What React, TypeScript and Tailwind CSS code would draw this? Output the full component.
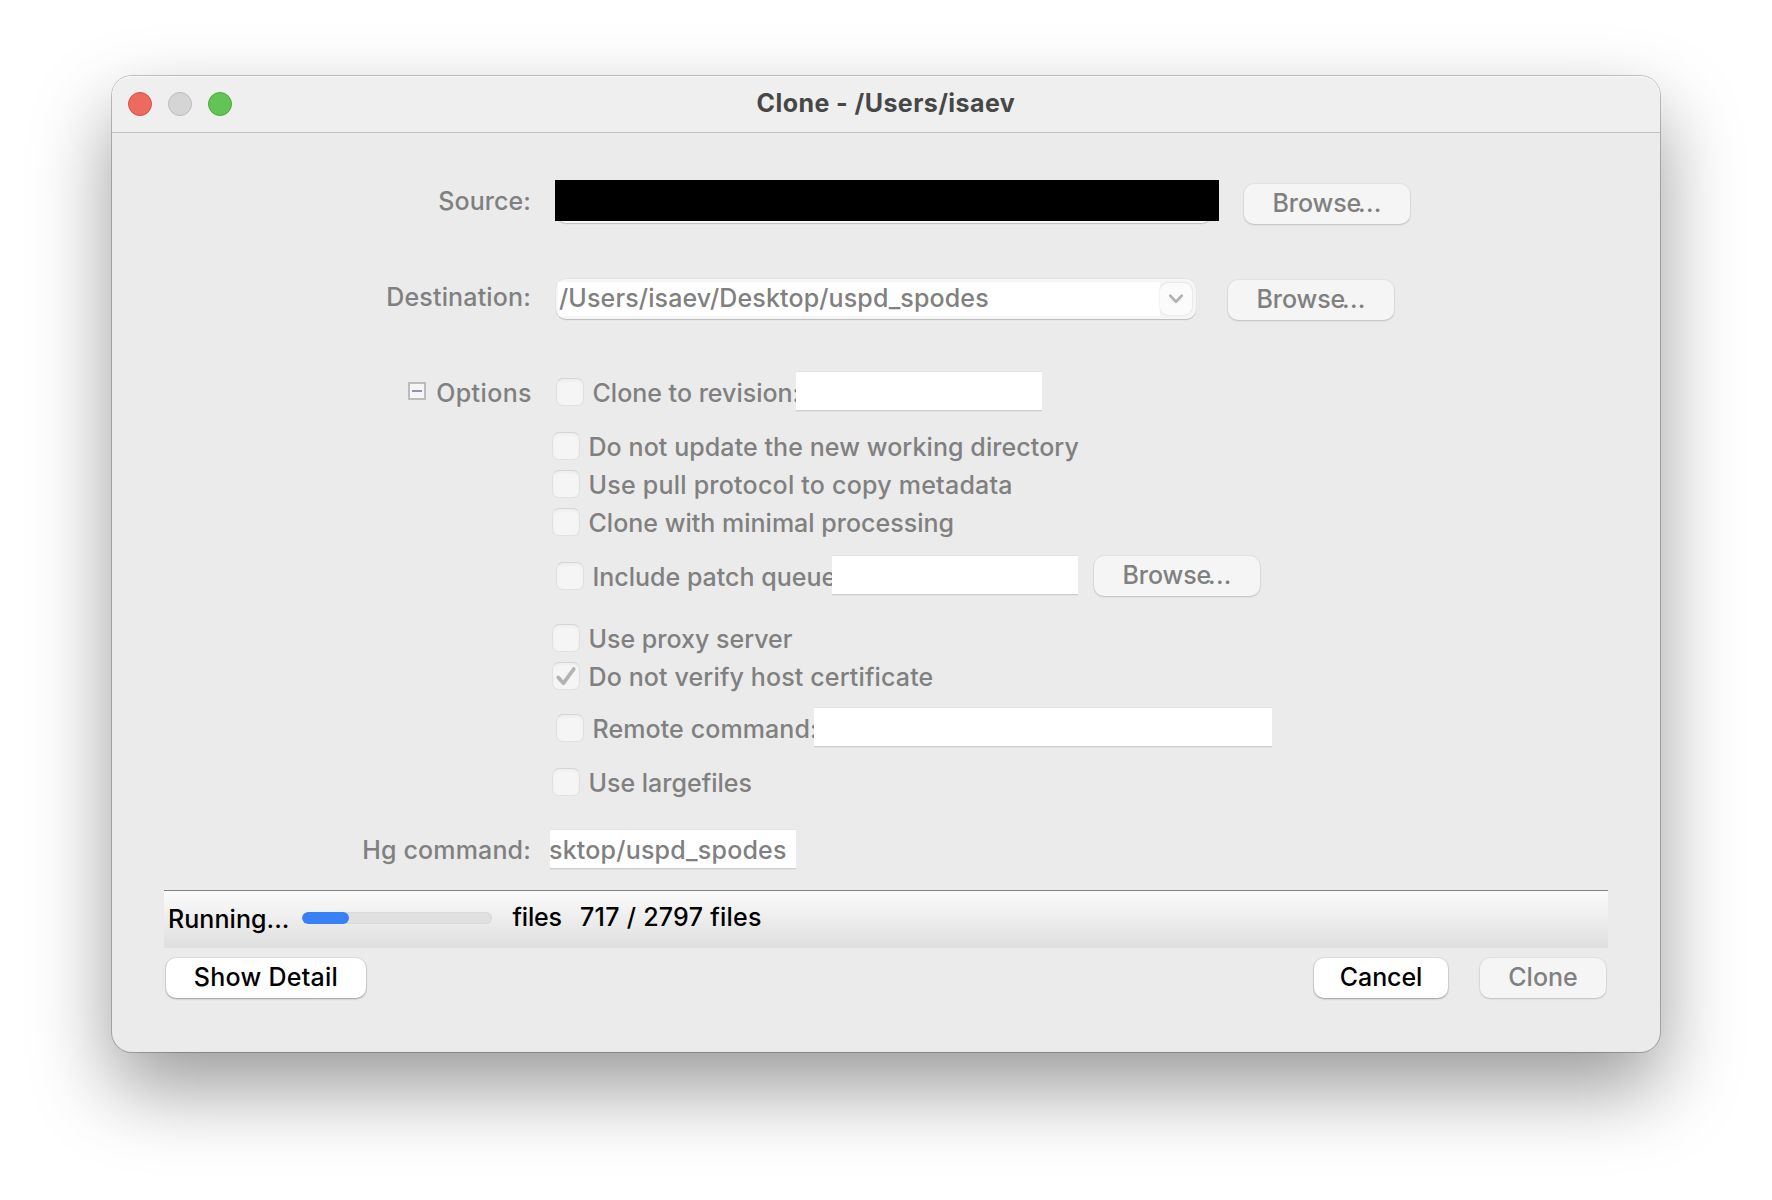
import type { ReactNode } from "react";

function Label({ children, className = "" }: { children: ReactNode; className?: string }) {
  return <div className={`w-[419px] shrink-0 text-right whitespace-nowrap text-[#808080] ${className}`}>{children}</div>;
}

function Check({
  label,
  checked = false,
  className = "",
  textClass = "",
}: {
  label: string;
  checked?: boolean;
  className?: string;
  textClass?: string;
}) {
  return (
    <label className={`flex h-7 shrink-0 gap-[8.5px] ${className}`}>
      <span className="flex size-7 shrink-0 items-center justify-center rounded-[7px] border border-black/[0.08] border-t-black/[0.13] bg-[#f5f5f5] shadow-[inset_0_2px_3px_rgba(0,0,0,0.035)]">
        {checked && (
          <svg width="26" height="26" viewBox="0 0 26 26" fill="none">
            <path d="M5.3 14.4 10.5 20.2 20.8 6" stroke="#b3b3b3" strokeWidth="3.8" strokeLinecap="round" strokeLinejoin="round" />
          </svg>
        )}
      </span>
      <span className={`whitespace-nowrap text-[#808080] ${textClass}`}>{label}</span>
    </label>
  );
}

function Field({ children, className = "" }: { children?: ReactNode; className?: string }) {
  return (
    <div
      className={`relative h-[38px] shrink-0 overflow-hidden bg-white whitespace-nowrap text-[#808080] shadow-[0_1px_0_#cfcfcf,0_2px_0_#dfdfdf,0_-1px_0_rgba(0,0,0,0.03)] ${className}`}
    >
      {children}
    </div>
  );
}

function Button({ children, disabled = false, className = "" }: { children: ReactNode; disabled?: boolean; className?: string }) {
  return (
    <button
      className={`flex h-10 shrink-0 justify-center rounded-[10px] pt-1 whitespace-nowrap ${
        disabled
          ? "bg-[#f5f5f5] text-[#808080] shadow-[0_0_0_1px_rgba(0,0,0,0.03),0_1px_2px_rgba(0,0,0,0.16)]"
          : "bg-white text-black shadow-[0_0_0_1px_rgba(0,0,0,0.05),0_1px_2px_rgba(0,0,0,0.3)]"
      } ${className}`}
    >
      {children}
    </button>
  );
}

function BrowseButton({ className = "" }: { className?: string }) {
  return (
    <Button disabled className={`w-[166px] ${className}`}>
      <span className="tracking-[-0.1px]">Browse</span>
      <span className="-ml-[3px] tracking-[0.2px]">...</span>
    </Button>
  );
}

export default function App() {
  return (
    <div className="flex h-[1200px] w-[1772px] items-start justify-center overflow-hidden bg-white pt-[76px] font-['Inter',sans-serif] text-[25px] leading-[30px] font-medium">
      <div className="flex h-[976px] w-[1548px] flex-col rounded-[20px] bg-[#ebebeb] shadow-[0_0_0_1px_rgba(0,0,0,0.22),0_36px_80px_rgba(0,0,0,0.4)]">
        <header className="flex h-[57px] shrink-0 items-start rounded-t-[20px] border-b border-[#c3c3c3] bg-[#efefef] pl-4 shadow-[inset_0_1px_0_#fafafa]">
          <div className="mt-4 flex w-[340px] gap-4">
            <span className="size-6 rounded-full border border-[#d55248] bg-[#ec6a5e]" />
            <span className="size-6 rounded-full border border-[#bababa] bg-[#d5d5d5]" />
            <span className="size-6 rounded-full border border-[#51a73e] bg-[#61c454]" />
          </div>
          <h1 className="mt-3 ml-[288.5px] text-[25px] leading-[30px] font-bold tracking-[0.43px] whitespace-nowrap text-[#474747]">
            Clone - /Users/isaev
          </h1>
        </header>

        <main className="flex flex-col pt-[47px]">
          <div className="flex h-11">
            <Label className="pt-[6px] tracking-[0.08px]">Source:</Label>
            <div className="relative ml-6 h-[43px] w-[664px]">
              <div className="ml-px h-[43px] w-[656px] rounded-[10px] bg-[#f8f8f8] shadow-[0_1px_1px_rgba(0,0,0,0.2)]" />
              <div className="absolute inset-x-0 top-0 h-[41px] bg-black" />
            </div>
            <BrowseButton className="mt-1 ml-[25px]" />
          </div>

          <div className="mt-[55px] flex h-[41px]">
            <Label className="pt-[3px] tracking-[0.16px]">Destination:</Label>
            <div className="ml-[25px] flex h-10 w-[640px] rounded-[10px] bg-[#f6f6f6] pt-[3px] pl-[2px] shadow-[0_-1px_0_rgba(0,0,0,0.03),0_1px_1px_rgba(0,0,0,0.2)]">
              <div className="h-[34px] w-[602px] bg-white pt-px pl-px tracking-[0.13px] whitespace-nowrap text-[#808080]">
                /Users/isaev/Desktop/uspd_spodes
              </div>
              <div className="mt-px flex h-8 w-8 items-center justify-center rounded-[8px] bg-[#fbfbfb] shadow-[0_0_2px_rgba(0,0,0,0.18)]">
                <svg width="16" height="12" viewBox="0 0 16 12" fill="none">
                  <path d="M2.3 2.8 8 8.8 13.7 2.8" stroke="#b2b2b2" strokeWidth="2.7" strokeLinecap="round" strokeLinejoin="round" />
                </svg>
              </div>
            </div>
            <BrowseButton className="mt-px ml-8" />
          </div>

          <div className="mt-[52px] flex h-[38px]">
            <Label className="flex justify-end pt-[6px] tracking-[0.4px]">
              <span className="mt-1 mr-[10px] flex size-[18px] items-center justify-center border-2 border-[#bcbcbc] bg-[#f6f6f6]">
                <span className="h-[2px] w-[10px] bg-[#8c96b4]" />
              </span>
              <span className="-mr-px">Options</span>
            </Label>
            <Check label="Clone to revision:" className="mt-[6px] ml-[25px]" textClass="w-[203.5px]" />
            <Field className="w-[246px]" />
          </div>

          <div className="mt-[22px] ml-[440px] flex flex-col gap-[10px]">
            <Check label="Do not update the new working directory" textClass="tracking-[0.08px]" />
            <Check label="Use pull protocol to copy metadata" textClass="tracking-[0.23px]" />
            <Check label="Clone with minimal processing" textClass="tracking-[0.01px]" />
          </div>

          <div className="mt-5 ml-[444px] flex h-10">
            <Check label="Include patch queue" className="mt-[6px]" textClass="w-[239.5px]" />
            <Field className="w-[246px]" />
            <BrowseButton className="ml-4" />
          </div>

          <div className="mt-7 ml-[440px] flex flex-col gap-[10px]">
            <Check label="Use proxy server" />
            <Check label="Do not verify host certificate" checked textClass="tracking-[0.13px]" />
          </div>

          <div className="mt-[18px] ml-[444px] flex h-[38px]">
            <Check label="Remote command:" className="mt-[6px]" textClass="w-[221.5px] tracking-[0.1px]" />
            <Field className="w-[458px]" />
          </div>

          <Check label="Use largefiles" className="mt-[22px] ml-[440px]" />

          <div className="mt-[34px] flex h-[38px]">
            <Label className="pt-[5px] tracking-[0.17px]">Hg command:</Label>
            <Field className="ml-[19px] w-[246px] pt-[5px] tracking-[0.2px]">
              <span className="-ml-px">sktop/uspd_spodes</span>
            </Field>
          </div>

          <div className="mt-[22px] ml-[52px] flex h-[58px] w-[1444px] border-t border-[#828282] bg-linear-to-b from-[#fbfbfb] to-[#dfdfdf] text-black">
            <span className="mt-[13px] ml-[4px] w-[134px] tracking-[0.06px]">Running...</span>
            <div className="mt-[21px] h-3 w-[190px] overflow-hidden rounded-full bg-[#e0e0e0] shadow-[inset_0_0_2px_rgba(0,0,0,0.1)]">
              <div className="h-3 w-[47px] rounded-full bg-[#3880f6]" />
            </div>
            <span className="mt-[11px] ml-[20.5px] w-[67.5px] tracking-[-0.2px]">files</span>
            <span className="mt-[11px] tracking-[0.27px] whitespace-nowrap">717 / 2797 files</span>
          </div>

          <div className="mt-[10px] ml-[54px] flex w-[1440px]">
            <Button className="w-[200px] tracking-[0.26px]">Show Detail</Button>
            <Button className="ml-auto w-[134px] tracking-[-0.1px]">Cancel</Button>
            <Button disabled className="ml-8 w-[126px]">
              Clone
            </Button>
          </div>
        </main>
      </div>
    </div>
  );
}
